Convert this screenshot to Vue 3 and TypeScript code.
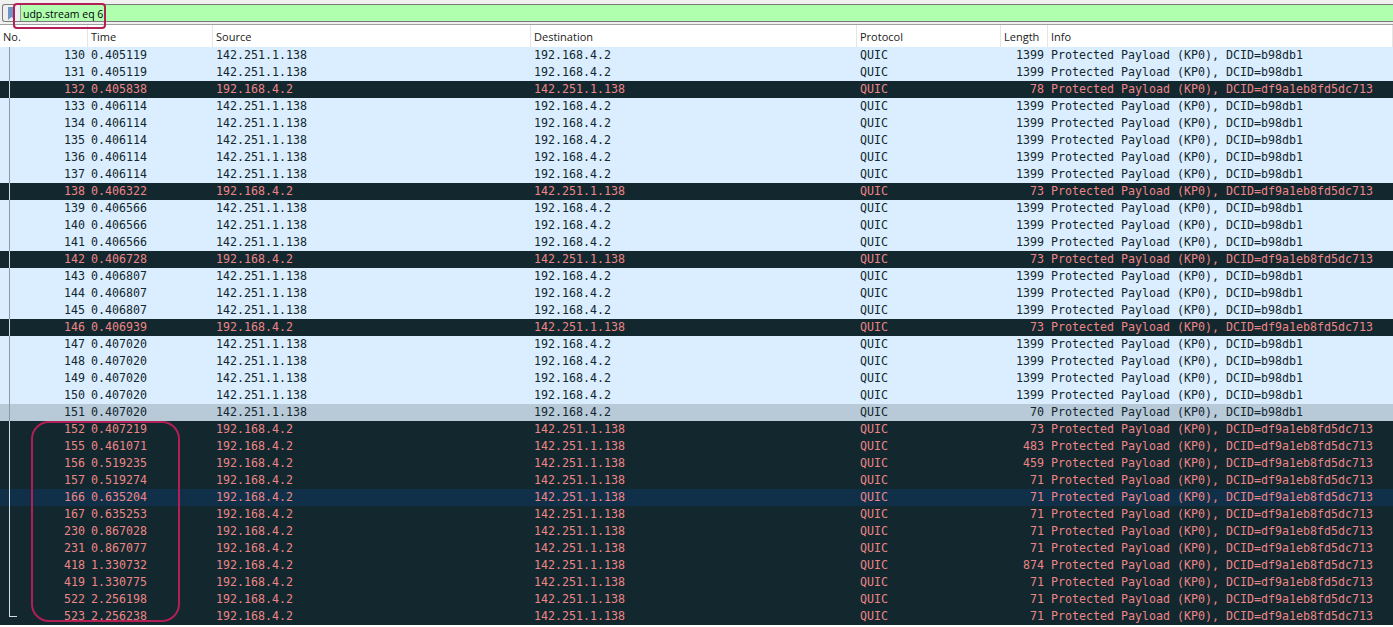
<script setup lang="ts">
interface Row { no: number; time: string; kind: 's' | 'c'; len: number; tone?: string }
const raw: [number, string, number][] = [
  [130,'0.405119',1399],[131,'0.405119',1399],[132,'0.405838',78],[133,'0.406114',1399],[134,'0.406114',1399],
  [135,'0.406114',1399],[136,'0.406114',1399],[137,'0.406114',1399],[138,'0.406322',73],[139,'0.406566',1399],
  [140,'0.406566',1399],[141,'0.406566',1399],[142,'0.406728',73],[143,'0.406807',1399],[144,'0.406807',1399],
  [145,'0.406807',1399],[146,'0.406939',73],[147,'0.407020',1399],[148,'0.407020',1399],[149,'0.407020',1399],
  [150,'0.407020',1399],[151,'0.407020',70],[152,'0.407219',73],[155,'0.461071',483],[156,'0.519235',459],
  [157,'0.519274',71],[166,'0.635204',71],[167,'0.635253',71],[230,'0.867028',71],[231,'0.867077',71],
  [418,'1.330732',874],[419,'1.330775',71],[522,'2.256198',71],[523,'2.256238',71]
]
const clientNos = new Set([132,138,142,146,152,155,156,157,166,167,230,231,418,419,522,523])
const rows: Row[] = raw.map(([no, time, len]) => ({
  no, time, len, kind: clientNos.has(no) ? 'c' : 's',
  tone: no === 151 ? 'end' : no === 166 ? 'sel' : no === 523 ? 'last' : ''
}))
</script>

<template>
  <div class="app">
    <div class="top">
      <div class="filter">
        <span class="book"><svg width="7" height="13" viewBox="0 0 7 13"><path d="M0 0h7v13l-3.500-3-3.500 3z" fill="#6d95c8"/></svg></span>
        <span class="sep"></span>
        <span class="ftext">udp.stream eq 6</span>
      </div>
    </div>
    <div class="head grid">
      <span class="h">No.</span><span class="h">Time</span><span class="h">Source</span>
      <span class="h">Destination</span><span class="h">Protocol</span><span class="h">Length</span><span class="h">Info</span>
    </div>
    <div class="rows">
      <div v-for="r in rows" :key="r.no" class="row grid" :class="[r.kind, r.tone]">
        <span class="no">{{ r.no }}</span>
        <span>{{ r.time }}</span>
        <span>{{ r.kind === 'c' ? '192.168.4.2' : '142.251.1.138' }}</span>
        <span>{{ r.kind === 'c' ? '142.251.1.138' : '192.168.4.2' }}</span>
        <span>QUIC</span>
        <span class="len">{{ r.len }}</span>
        <span>Protected Payload (KP0), DCID={{ r.kind === 'c' ? 'df9a1eb8fd5dc713' : 'b98db1' }}</span>
      </div>
    </div>
    <div class="mark mark-filter"></div>
    <div class="mark mark-list"></div>
  </div>
</template>

<style>
html, body { margin: 0; background: #fff; }
</style>

<style scoped>
.app { position: relative; width: 1393px; height: 627px; overflow: hidden; background: #fff; font-family: "DejaVu Sans Mono", monospace; }
.top { height: 25px; box-sizing: border-box; padding: 4px 0 0 2px; background: #f0f0f0; border-bottom: 1px solid #a0a0a0; }
.filter { height: 18px; box-sizing: border-box; display: flex; align-items: center; background: #afffaf; border: 1px solid #7a7a7a; border-right: 0; border-radius: 3px 0 0 3px; }
.book { width: 17px; height: 16px; display: flex; align-items: center; justify-content: center; background: #efefef; border-radius: 3px 0 0 3px; }
.sep { width: 1px; height: 16px; background: #9a9a9a; }
.ftext { margin-left: 2px; padding-top: 1px; font: 10.5px "Open Sans", "Liberation Sans", sans-serif; color: #000; }
.grid { display: grid; grid-template-columns: 88px 125px 318px 326px 144px 47px 1fr; }
.head { height: 22px; background: #fff; }
.h { height: 22px; padding: 1px 0 0 3px; box-sizing: border-box; border-right: 1px solid #e5e5e5; font: 11px/22px "Open Sans", "Liberation Sans", sans-serif; color: #1a1a1a; }
.rows { position: relative; }
.row { position: relative; height: 17px; line-height: 17px; font-size: 11.63px; white-space: pre; }
.row::before { content: ""; position: absolute; left: 9px; top: 0; bottom: 0; width: 1px; background: #8c9aa8; }
.row.c::before { background: #d5dce2; }
.row.last::before { bottom: 8px; }
.row.last::after { content: ""; position: absolute; left: 9px; top: 8px; width: 8px; height: 1px; background: #d5dce2; }
.row.s { background: #daeeff; color: #12272e; }
.row.c { background: #12272e; color: #ec8686; }
.row.end { background: #b8c9d8; }
.row.sel { background: #10304a; }
.row > span { padding-left: 3px; overflow: hidden; }
.row .no { text-align: right; padding: 0 3px 0 0; }
.row .len { text-align: right; padding: 0 4px 0 0; }
.mark { position: absolute; border: 2px solid #b21f55; box-sizing: border-box; pointer-events: none; }
.mark-filter { left: 13px; top: 3px; width: 93px; height: 26px; border-radius: 4px; }
.mark-list { left: 31px; top: 421px; width: 149px; height: 201px; border-radius: 18px; }
</style>
